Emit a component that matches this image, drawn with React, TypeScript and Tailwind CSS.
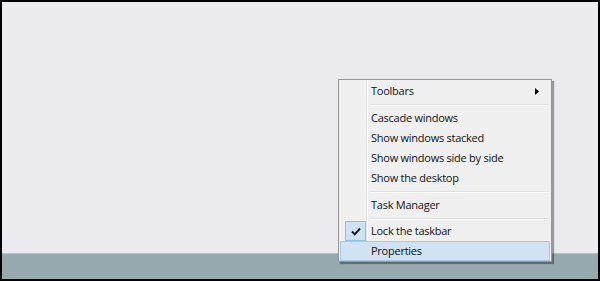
import React from 'react';

type Item = { label: string; arrow?: boolean; checked?: boolean; hover?: boolean } | 'sep' | 'sep-thin';

const items: Item[] = [
  { label: 'Toolbars', arrow: true },
  'sep',
  { label: 'Cascade windows' },
  { label: 'Show windows stacked' },
  { label: 'Show windows side by side' },
  { label: 'Show the desktop' },
  'sep',
  { label: 'Task Manager' },
  'sep-thin',
  { label: 'Lock the taskbar', checked: true },
  { label: 'Properties', hover: true },
];

const ContextMenu: React.FC = () => (
  <div className="absolute left-[338px] top-[79px] w-[214px] border border-[#979797] bg-[#f0f0f0] px-[1px] pt-[1px] shadow-[2px_2px_1px_rgba(0,0,0,0.35)]">
    <div className="absolute left-[27px] top-0 bottom-0 w-[2px] border-l border-[#e2e3e3] border-r border-r-white" />
    {items.map((it, i) =>
      it === 'sep' || it === 'sep-thin' ? (
        <div key={i} className={'ml-[30px] mr-[1px] pt-[3px] ' + (it === 'sep' ? 'pb-[2px]' : 'pb-[1px]')}>
          <div className="h-px bg-[#e0e0e0]" />
          <div className="h-px bg-white" />
        </div>
      ) : (
        <div
          key={i}
          className={
            'relative flex h-[20px] items-center ' +
            (it.hover ? 'border border-[#a8cbe8] bg-[#d1e2f2]' : 'border border-transparent')
          }
        >
          <div className="flex w-[29px] justify-center">
            {it.checked && (
              <div className="flex h-[20px] w-[21px] items-center justify-center border border-[#8fbfe7] bg-[#cde3f5]">
                <svg width="10" height="9" viewBox="0 0 10 9">
                  <path d="M1 4.5 L3.8 7.3 L9 1.5" fill="none" stroke="#1a1a1a" strokeWidth="2" />
                </svg>
              </div>
            )}
          </div>
          <span className="ml-[1px] flex-1 text-[11px] tracking-[-0.25px] text-[#111]">{it.label}</span>
          {it.arrow && (
            <svg width="4" height="7" viewBox="0 0 4 7" className="mr-[10px]">
              <path d="M0 0 L4 3.5 L0 7 Z" fill="#000" />
            </svg>
          )}
        </div>
      )
    )}
  </div>
);

const App: React.FC = () => {
  return (
    <div className="relative h-[281px] w-[600px] bg-black p-[2px]" style={{ fontFamily: '"Open Sans", "Noto Sans", sans-serif' }}>
      <div className="flex h-full flex-col">
        <div className="flex-1 bg-[#ebebef]" />
        <div className="h-[26px] border-t border-[#b4c3c7] bg-[#95a9ae]" />
      </div>
      <ContextMenu />
    </div>
  );
};

export default App;
